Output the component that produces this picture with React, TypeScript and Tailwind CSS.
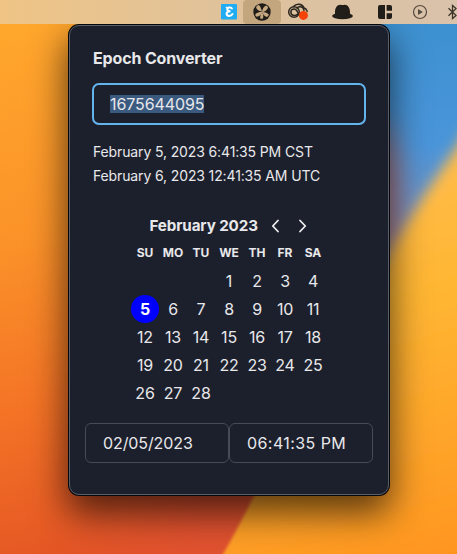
import React from "react";

const WEEKDAYS = ["SU", "MO", "TU", "WE", "TH", "FR", "SA"];
const LEADING_BLANKS = 3;
const DAYS_IN_MONTH = 28;
const SELECTED_DAY = 5;

function Wallpaper() {
  return (
    <svg
      className="absolute inset-0 h-full w-full"
      viewBox="0 0 457 554"
      preserveAspectRatio="none"
      aria-hidden="true"
    >
      <defs>
        <linearGradient id="left" gradientUnits="userSpaceOnUse" x1="0" y1="24" x2="110" y2="554">
          <stop offset="0" stopColor="#ffa72d" />
          <stop offset="0.4" stopColor="#fb9229" />
          <stop offset="0.7" stopColor="#f47426" />
          <stop offset="1" stopColor="#e45524" />
        </linearGradient>
        <linearGradient id="red" gradientUnits="userSpaceOnUse" x1="40" y1="480" x2="200" y2="480">
          <stop offset="0" stopColor="#e15230" stopOpacity="0" />
          <stop offset="1" stopColor="#e15230" />
        </linearGradient>
        <linearGradient id="redFade" gradientUnits="userSpaceOnUse" x1="0" y1="350" x2="0" y2="500">
          <stop offset="0" stopColor="#000" />
          <stop offset="1" stopColor="#fff" />
        </linearGradient>
        <mask id="redMask">
          <rect y="350" width="457" height="204" fill="url(#redFade)" />
        </mask>
        <linearGradient id="blue" gradientUnits="userSpaceOnUse" x1="400" y1="24" x2="400" y2="240">
          <stop offset="0" stopColor="#3d91d0" />
          <stop offset="0.55" stopColor="#4a95da" />
          <stop offset="1" stopColor="#7d91bd" />
        </linearGradient>
        <linearGradient id="petal" gradientUnits="userSpaceOnUse" x1="350" y1="200" x2="457" y2="554">
          <stop offset="0" stopColor="#ffbb48" />
          <stop offset="0.3" stopColor="#ffb632" />
          <stop offset="0.7" stopColor="#ffa429" />
          <stop offset="1" stopColor="#ff951f" />
        </linearGradient>
        <filter id="soft" x="-20%" y="-20%" width="140%" height="140%">
          <feGaussianBlur stdDeviation="7" />
        </filter>
        <filter id="haze" x="-100%" y="-50%" width="300%" height="200%">
          <feGaussianBlur stdDeviation="14" />
        </filter>
        <filter id="edge" x="-20%" y="-20%" width="140%" height="140%">
          <feGaussianBlur stdDeviation="1.500" />
        </filter>
      </defs>
      <rect width="457" height="554" fill="url(#left)" />
      <rect y="350" width="457" height="204" fill="url(#red)" mask="url(#redMask)" />
      <rect x="230" width="260" height="350" fill="url(#blue)" />
      <ellipse cx="380" cy="195" rx="16" ry="72" fill="#c27a80" filter="url(#haze)" />
      <path d="M500 78 L457 147 L425 194 L392 246 L330 370 V600 H500Z" fill="url(#petal)" filter="url(#soft)" />
      <path d="M222 556 Q236 532 256 492 L330 350 H480 V600 H200Z" fill="url(#petal)" filter="url(#edge)" />
    </svg>
  );
}

function MenuBar() {
  return (
    <header className="relative h-6 shrink-0 bg-linear-to-r from-[#efc485] via-[#dfc29b] to-[#d9c2ab]">
      <svg className="block h-6 w-[457px]" viewBox="0 0 457 24" aria-hidden="true">
        <rect x="221" y="4" width="16" height="15.500" rx="1" fill="#20acf2" />
        <path
          d="M231.900 8.600C231.500 7.100 227.300 7 227.300 9.300c0 1.400 1.300 2 3.200 2-2.400.1-3.900.9-3.900 2.500 0 2.900 4.600 2.700 5.900.3"
          fill="none" stroke="#fff" strokeWidth="2" strokeLinecap="round"
        />
        <path d="M226.200 7.200l1.500 1.400" stroke="#fff" strokeWidth="1.200" strokeLinecap="round" />
        <rect x="243" y="0" width="38" height="24" rx="4" fill="#c3a67e" />
        <circle cx="262" cy="12" r="8.700" fill="#211d18" />
        <g fill="#c6a981">
          <path d="M262 11.600C258.600 11 256.200 9.400 256.100 6.900c.7-1.200 1.700-1.900 2.800-2 1.700 1.600 2.400 4 3.100 6.700Z" />
          <path d="M262 12.400c.3-3.200 1.700-6.300 4.200-6.900 1.100.5 1.700 1.300 1.800 2.300-.9 2.500-3.500 3.900-6 4.600Z" />
          <path d="M262 11.900c2.600 0 5.300.7 6.900 2.700-.3 1.200-1 1.900-2 2.300-2.200-.5-4.100-2.500-4.900-5Z" />
          <path d="M262 12.200c1.300 1.900 1.600 4.200.9 6.400-1 .4-1.900.2-2.700-.3-.2-2.100.6-4.300 1.800-6.100Z" />
          <path d="M262.400 11.700c-.9 2.800-3.200 4.800-5.600 5-1-.5-1.500-1.300-1.600-2.300 1.700-1.900 4.300-2.800 7.200-2.700Z" />
        </g>
        <g fill="none" stroke="#2c271f" strokeLinecap="round">
          <path d="M293.500 6.600C296.300 3.200 301.800 3.600 304 7.700c1.600.6 2.700 2 3.200 3.700" strokeWidth="1.500" />
          <circle cx="294" cy="12" r="5.300" strokeWidth="1.500" />
          <path d="M297.400 14.200c-1.100 1.200-2.500 1.400-3.600 1.200-1.800-.3-3-1.700-2.900-3.400.1-1.700 1.400-3 3.200-3 1.900 0 2.800 1.400 3.600 3.100 1 2 1.600 3.800 3.300 4.600" strokeWidth="1.500" />
          <path d="M297 8c1.200-1.100 2.400-1.500 3.800-1.200 2 .4 3 2 3.200 3.600" strokeWidth="1.500" />
        </g>
        <circle cx="303.400" cy="15.400" r="4.500" fill="#f54207" />
        <path d="M335 16V12.500C335 8 337 4.800 340.200 4.800c1 0 1.500.3 2.300.3s1.300-.3 2.300-.3c3.200 0 5.200 3.200 5.200 7.700V16Z" fill="#211d18" />
        <ellipse cx="342.500" cy="16" rx="10.400" ry="3.300" fill="#211d18" />
        <path d="M380 5h5v14h-5a2 2 0 0 1-2-2V7a2 2 0 0 1 2-2Z" fill="#211d18" />
        <path d="M386.600 5h3.400a2 2 0 0 1 2 2v3.700h-5.400Z" fill="#211d18" />
        <path d="M386.600 13.300h5.400V17a2 2 0 0 1-2 2h-3.400Z" fill="#211d18" />
        <circle cx="420" cy="12" r="6.500" fill="none" stroke="#544a3e" strokeWidth="1.200" />
        <path d="M418 8.900v6.200l4.900-3.100Z" fill="#544a3e" />
        <path d="M448.500 8.300l7.600 7.200-3.600 3.100V5.400l3.600 3.100-7.600 7.200" fill="none" stroke="#3c3429" strokeWidth="1.300" />
      </svg>
    </header>
  );
}

function Calendar() {
  const days = Array.from({ length: DAYS_IN_MONTH }, (_, i) => i + 1);
  return (
    <section className="mt-[26px] flex w-[196px] flex-col self-center">
      <div className="flex h-6 items-center pl-[18.500px]">
        <h2 className="w-[109px] text-[15.200px] leading-6 font-bold tracking-[-0.120px] whitespace-nowrap">February 2023</h2>
        <button className="ml-3 flex h-6 w-2.5 items-center justify-center pb-px" aria-label="Previous month">
          <svg width="10" height="14" viewBox="0 0 10 14" fill="none" stroke="#eeeeef" strokeWidth="1.800" strokeLinecap="round" strokeLinejoin="round">
            <path d="M7 1.500 1.800 7 7 12.500" />
          </svg>
        </button>
        <button className="ml-[17px] flex h-6 w-2.5 items-center justify-center pb-px" aria-label="Next month">
          <svg width="10" height="14" viewBox="0 0 10 14" fill="none" stroke="#eeeeef" strokeWidth="1.800" strokeLinecap="round" strokeLinejoin="round">
            <path d="M2 1.500 7.300 7 2 12.500" />
          </svg>
        </button>
      </div>
      <div className="mt-[3px] grid grid-cols-7 text-center text-[12px] leading-6 font-bold">
        {WEEKDAYS.map((d) => (
          <span key={d}>{d}</span>
        ))}
      </div>
      <div className="mt-[2px] grid auto-rows-[28px] grid-cols-7 text-center text-[16px] leading-7 tracking-[-0.200px]">
        {Array.from({ length: LEADING_BLANKS }, (_, i) => (
          <span key={`blank-${i}`} />
        ))}
        {days.map((d) => (
          <span key={d} className={d === SELECTED_DAY ? "rounded-full bg-[#0000ff] font-bold text-white" : ""}>
            {d}
          </span>
        ))}
      </div>
    </section>
  );
}

export default function App() {
  return (
    <div className="relative h-[554px] w-[457px] overflow-hidden font-[Inter,sans-serif]">
      <Wallpaper />
      <div className="relative flex h-full flex-col">
        <MenuBar />
        <main className="mt-px ml-[69px] flex h-[470px] w-[320px] flex-col rounded-[10px] border border-[#5b5f69] bg-[#1c202d] text-[#e8e8ea] shadow-[0_0_0_1px_#05070b,0_16px_36px_2px_rgba(0,0,0,0.65)] [clip-path:inset(-1px_-80px_-80px_-80px)]">
          <h1 className="mt-5 ml-[23px] text-[16px] leading-6 font-bold tracking-[-0.150px]">Epoch Converter</h1>
          <div className="mt-[13px] ml-[22px] flex h-[42px] w-[274px] items-center rounded-[7px] border-2 border-[#63b3ed] pl-4">
            <span className="bg-[#3a5a80] text-[16px] leading-[18px] tracking-[-0.100px]">1675644095</span>
          </div>
          <div className="mt-[15px] ml-[23px] text-[14px] leading-6 tracking-[-0.130px] whitespace-nowrap">
            <p>February 5, 2023 6:41:35 PM CST</p>
            <p>February 6, 2023 12:41:35 AM UTC</p>
          </div>
          <Calendar />
          <div className="mt-4 ml-[15px] flex text-[16px] leading-6">
            <div className="flex h-10 w-36 items-center rounded-md border border-[#474b56] pl-[17px] tracking-[-0.100px] whitespace-nowrap">02/05/2023</div>
            <div className="flex h-10 w-36 items-center rounded-md border border-[#474b56] pl-[17px] tracking-[0.420px] whitespace-nowrap">06:41:35 PM</div>
          </div>
        </main>
      </div>
    </div>
  );
}
